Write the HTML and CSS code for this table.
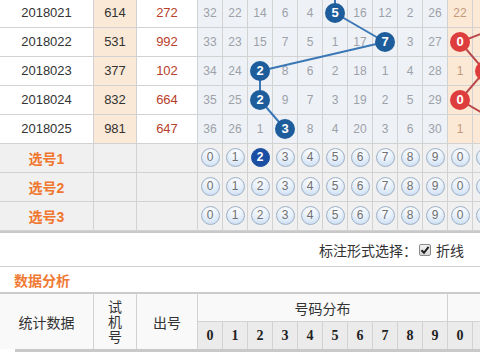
FILE: index.html
```html
<!DOCTYPE html>
<html lang="zh-CN">
<head>
<meta charset="utf-8">
<link rel="stylesheet" href="styles.css">
</head>
<body>
<div class="chart">
  <div class="grid">
    <div class="c per">2018021</div><div class="c sim">614</div><div class="c drw">272</div>
    <div class="c n">32</div><div class="c n">22</div><div class="c n">14</div><div class="c n">6</div><div class="c n">4</div><div class="c n"><span class="ball">5</span></div><div class="c n">16</div><div class="c n">12</div><div class="c n">2</div><div class="c n">26</div><div class="c p">22</div><div class="c p"></div>

    <div class="c per">2018022</div><div class="c sim">531</div><div class="c drw">992</div>
    <div class="c n">33</div><div class="c n">23</div><div class="c n">15</div><div class="c n">7</div><div class="c n">5</div><div class="c n">1</div><div class="c n">17</div><div class="c n"><span class="ball">7</span></div><div class="c n">3</div><div class="c n">27</div><div class="c p"><span class="ball red">0</span></div><div class="c p"></div>

    <div class="c per">2018023</div><div class="c sim">377</div><div class="c drw">102</div>
    <div class="c n">34</div><div class="c n">24</div><div class="c n"><span class="ball">2</span></div><div class="c n">8</div><div class="c n">6</div><div class="c n">2</div><div class="c n">18</div><div class="c n">1</div><div class="c n">4</div><div class="c n">28</div><div class="c p">1</div><div class="c p"><span class="ball red"></span></div>

    <div class="c per">2018024</div><div class="c sim">832</div><div class="c drw">664</div>
    <div class="c n">35</div><div class="c n">25</div><div class="c n"><span class="ball">2</span></div><div class="c n">9</div><div class="c n">7</div><div class="c n">3</div><div class="c n">19</div><div class="c n">2</div><div class="c n">5</div><div class="c n">29</div><div class="c p"><span class="ball red">0</span></div><div class="c p"></div>

    <div class="c per">2018025</div><div class="c sim">981</div><div class="c drw">647</div>
    <div class="c n">36</div><div class="c n">26</div><div class="c n">1</div><div class="c n"><span class="ball">3</span></div><div class="c n">8</div><div class="c n">4</div><div class="c n">20</div><div class="c n">3</div><div class="c n">6</div><div class="c n">30</div><div class="c p">1</div><div class="c p"></div>

    <div class="c s lab">选号1</div><div class="c s"></div><div class="c s"></div>
    <div class="c s"><span class="btn">0</span></div><div class="c s"><span class="btn">1</span></div><div class="c s"><span class="btn on">2</span></div><div class="c s"><span class="btn">3</span></div><div class="c s"><span class="btn">4</span></div><div class="c s"><span class="btn">5</span></div><div class="c s"><span class="btn">6</span></div><div class="c s"><span class="btn">7</span></div><div class="c s"><span class="btn">8</span></div><div class="c s"><span class="btn">9</span></div><div class="c s"><span class="btn">0</span></div><div class="c s"><span class="btn"></span></div>

    <div class="c s lab">选号2</div><div class="c s"></div><div class="c s"></div>
    <div class="c s"><span class="btn">0</span></div><div class="c s"><span class="btn">1</span></div><div class="c s"><span class="btn">2</span></div><div class="c s"><span class="btn">3</span></div><div class="c s"><span class="btn">4</span></div><div class="c s"><span class="btn">5</span></div><div class="c s"><span class="btn">6</span></div><div class="c s"><span class="btn">7</span></div><div class="c s"><span class="btn">8</span></div><div class="c s"><span class="btn">9</span></div><div class="c s"><span class="btn">0</span></div><div class="c s"><span class="btn"></span></div>

    <div class="c s lab">选号3</div><div class="c s"></div><div class="c s"></div>
    <div class="c s"><span class="btn">0</span></div><div class="c s"><span class="btn">1</span></div><div class="c s"><span class="btn">2</span></div><div class="c s"><span class="btn">3</span></div><div class="c s"><span class="btn">4</span></div><div class="c s"><span class="btn">5</span></div><div class="c s"><span class="btn">6</span></div><div class="c s"><span class="btn">7</span></div><div class="c s"><span class="btn">8</span></div><div class="c s"><span class="btn">9</span></div><div class="c s"><span class="btn">0</span></div><div class="c s"><span class="btn"></span></div>
  </div>
  <svg class="lines" width="500" height="146" viewBox="0 0 500 146">
    <g stroke="#3a77b5" stroke-width="2" fill="none">
      <line x1="335" y1="14" x2="335" y2="-20"/>
      <line x1="335" y1="14" x2="385" y2="43"/>
      <line x1="385" y1="43" x2="260" y2="72"/>
      <line x1="260" y1="72" x2="260" y2="101"/>
      <line x1="260" y1="101" x2="285" y2="130"/>
    </g>
    <g stroke="#b9474a" stroke-width="2" fill="none">
      <line x1="460" y1="43" x2="535" y2="14"/>
      <line x1="460" y1="43" x2="485" y2="72"/>
      <line x1="485" y1="72" x2="460" y2="101"/>
      <line x1="460" y1="101" x2="510" y2="130"/>
    </g>
  </svg>
</div>

<div class="opts">标注形式选择：<span class="chk"><svg width="10" height="10" viewBox="0 0 10 10"><path d="M1.5 5.2 L4 7.8 L8.6 1.8" stroke="#222" stroke-width="2" fill="none"/></svg></span>折线</div>

<div class="title">数据分析</div>

<div class="head">
  <div class="h big">统计数据</div>
  <div class="h big"><span class="vert">试机号</span></div>
  <div class="h big">出号</div>
  <div class="h grp">号码分布</div>
  <div class="h grp2"></div>
  <div class="h d">0</div><div class="h d">1</div><div class="h d">2</div><div class="h d">3</div><div class="h d">4</div><div class="h d">5</div><div class="h d">6</div><div class="h d">7</div><div class="h d">8</div><div class="h d">9</div><div class="h d">0</div><div class="h d"></div>
</div>
<div class="scroll"></div>
</body>
</html>
```

FILE: styles.css
```css
html, body {
  margin: 0;
  padding: 0;
  background: #fff;
}
body {
  width: 480px;
  height: 352px;
  overflow: hidden;
  font-family: "Liberation Sans", "Noto Sans CJK SC", sans-serif;
  font-size: 13px;
  color: #333;
}
.chart {
  position: relative;
  margin-top: -1px;
  width: max-content;
}
.grid {
  display: grid;
  grid-template-columns: 94px 43px 61px repeat(12, 25px);
  grid-auto-rows: 29px;
  border-bottom: 1px solid #c8c8c8;
  width: max-content;
}
.c {
  box-sizing: border-box;
  border-right: 1px solid #d2d2d2;
  border-bottom: 1px solid #d2d2d2;
  display: flex;
  align-items: center;
  justify-content: center;
  padding-bottom: 1px;
}
.per { background: #fff; color: #333; font-size: 13px; }
.sim { background: #fae9d6; color: #333; font-size: 13px; }
.drw { background: #fff; color: #b8402a; font-size: 13px; }
.n { background: #eef2f6; color: #9da1a9; font-size: 12px; }
.p { background: #fbe9d6; color: #c39a7c; font-size: 12px; }
.s { background: #f0f0f0; }
.lab {
  color: #f0762d;
  font-weight: bold;
  font-size: 14px;
}
.ball {
  position: relative;
  z-index: 2;
  width: 20px;
  height: 20px;
  border-radius: 50%;
  background: #1e5d9b;
  color: #fff;
  font-weight: bold;
  font-size: 13px;
  line-height: 20px;
  text-align: center;
}
.ball.red { background: #dd3d3d; }
.lines {
  position: absolute;
  left: 0;
  top: 0;
  z-index: 1;
  overflow: visible;
}
.btn {
  box-sizing: border-box;
  width: 19px;
  height: 19px;
  border-radius: 50%;
  border: 1px solid #9fb0c4;
  background: radial-gradient(circle at 50% 25%, #ffffff 0%, #e8f1fb 45%, #c4d9f1 100%);
  color: #707070;
  font-size: 12px;
  line-height: 17px;
  text-align: center;
}
.btn.on {
  background: #1b4fa3;
  border-color: #1b4fa3;
  color: #fff;
  font-weight: bold;
}
.opts {
  box-sizing: border-box;
  height: 35px;
  border-top: 1px solid #c8c8c8;
  border-bottom: 1px solid #d0d0d0;
  display: flex;
  align-items: center;
  justify-content: flex-end;
  padding: 0 16px 0 0;
  font-family: "Noto Sans CJK SC", sans-serif;
  font-size: 14px;
  color: #333;
}
.chk {
  box-sizing: border-box;
  width: 12px;
  height: 12px;
  margin: 0 5px 0 2px;
  border: 1px solid #8a8a8a;
  border-radius: 2px;
  background: linear-gradient(#f4f4f4, #d8d8d8);
  display: flex;
  align-items: center;
  justify-content: center;
}
.title {
  box-sizing: border-box;
  height: 27px;
  padding-left: 14px;
  border-bottom: 2px solid #cccccc;
  display: flex;
  align-items: center;
  font-family: "Noto Sans CJK SC", sans-serif;
  font-size: 14px;
  font-weight: bold;
  color: #f07a33;
}
.head {
  display: grid;
  grid-template-columns: 94px 43px 61px repeat(12, 25px);
  grid-template-rows: 28px 27px;
  width: max-content;
  font-family: "Noto Sans CJK SC", sans-serif;
  font-size: 14px;
  color: #333;
}
.h {
  box-sizing: border-box;
  border-right: 1px solid #d2d2d2;
  border-bottom: 1px solid #d2d2d2;
  background: #f9f9f9;
  display: flex;
  align-items: center;
  justify-content: center;
}
.big { grid-row: span 2; border-bottom: none; }
.grp { grid-column: span 10; }
.grp2 { grid-column: span 2; }
.vert {
  width: 1em;
  line-height: 15px;
  text-align: center;
  word-break: break-all;
}
.d {
  background: #ebebeb;
  border-bottom: none;
  font-family: "Liberation Serif", serif;
  font-weight: bold;
  font-size: 14px;
  color: #222;
}
.scroll {
  height: 3px;
  margin-left: 15px;
  background: #c9c9c9;
}
```
